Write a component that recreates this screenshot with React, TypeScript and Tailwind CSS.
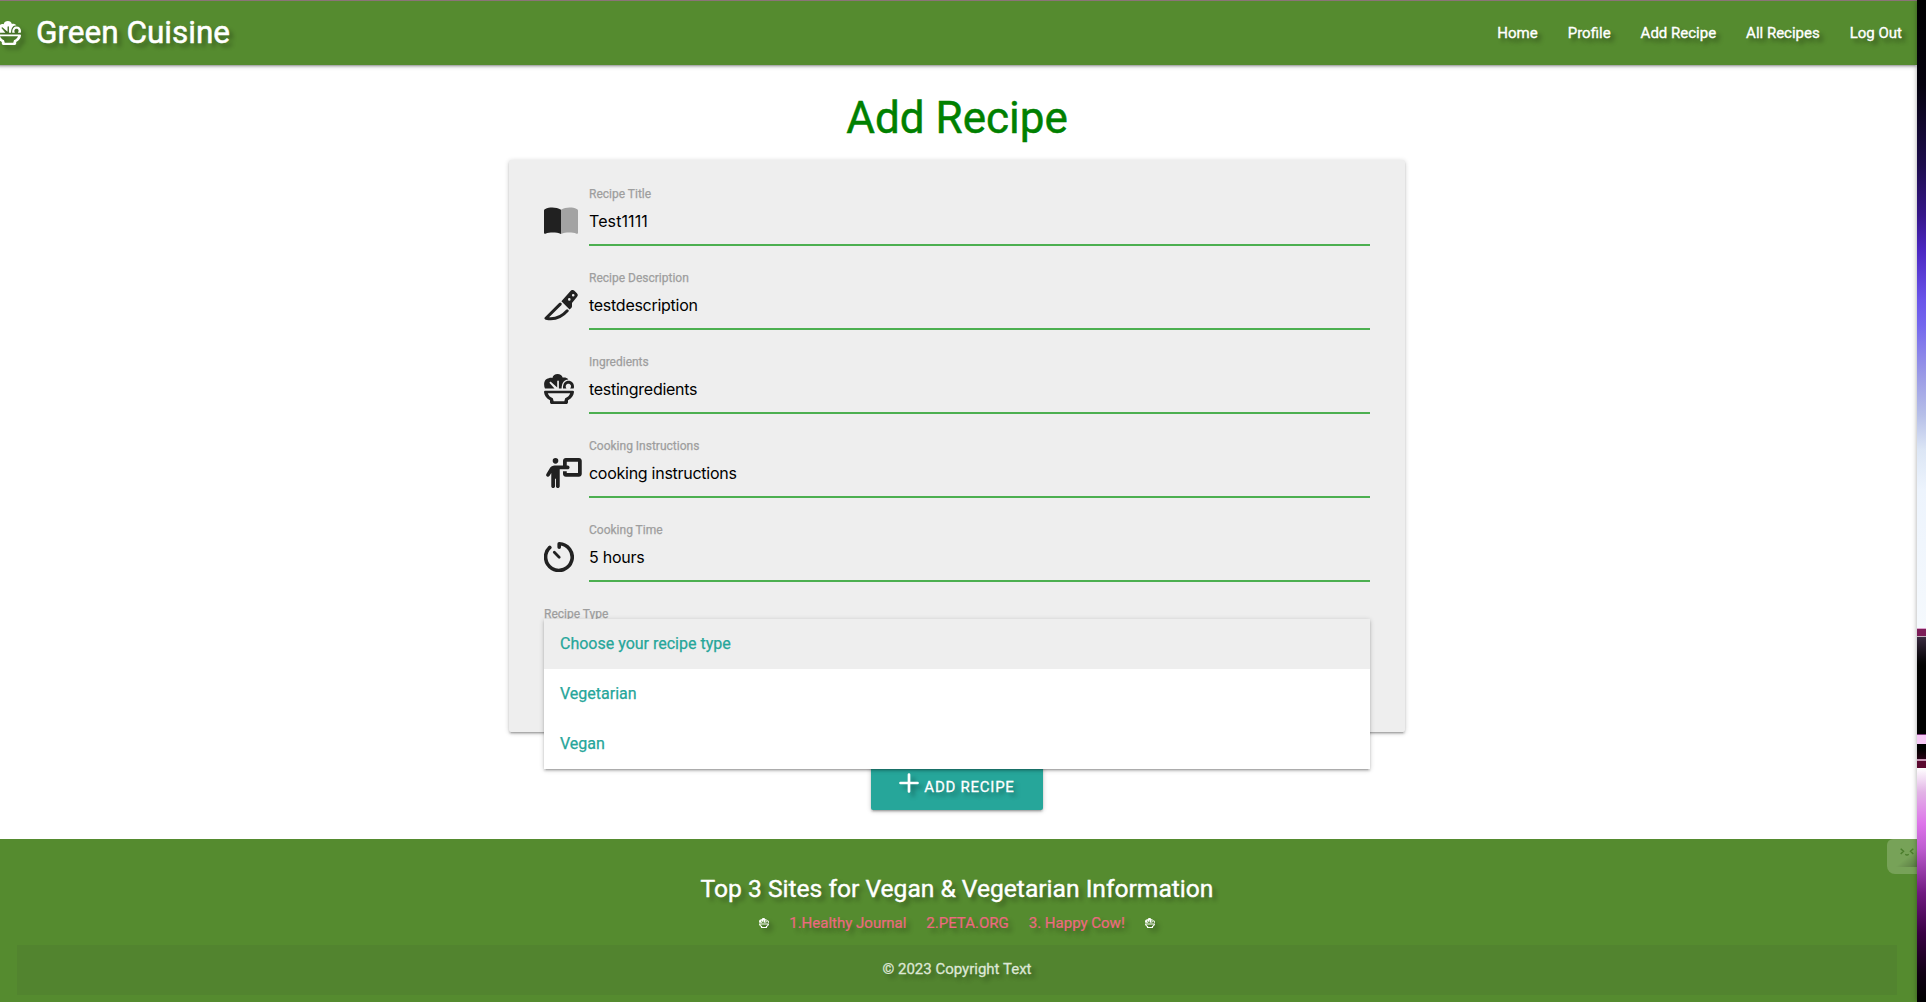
import { FaPersonChalkboard } from 'react-icons/fa6';
import type { ReactNode } from 'react';

function SaladIcon({ className }: { className: string }) {
  return (
    <svg viewBox="0 0 30 30" className={className} fill="currentColor">
      <path d="M1 14.6C-.8 10.5 0 4.7 4.900 4.300 6.200 3.600 7.600 3.700 8.400 4.100 8.800 1.400 11 0 13.600 0c2.500 0 4.500 1.300 5 3.600 2.100-.5 4.400.1 5.800 1.800-4.300-.1-6.700 3.400-6.800 9.200h-2.700V7.200c0-1-1.700-1-1.700 0v6.300L7.100 8c-.8-.7-2 .4-1.300 1.200l4.700 5.400z" />
      <path d="M19 14.600C18.800 8.900 21.600 6.800 24.400 6.800c3.400 0 5.600 2.500 5.600 5.600 0 .8-.1 1.500-.4 2.200h-3.500c2-2.400.6-4.800-1.700-4.800-2.200 0-3.500 2.200-2 4.800z" />
      <path fillRule="evenodd" d="M1.200 16.800h27.600c.8 0 1.300.6 1.200 1.300-.3 3.600-2.500 6.500-6 8.200v1.900c0 1-.8 1.800-1.800 1.800H7.800C6.800 30 6 29.200 6 28.200v-1.900C2.500 24.600.3 21.700 0 18.100c-.1-.7.4-1.300 1.200-1.300zm2.600 2.400c.7 2.200 2.300 3.800 5 5l.9 3h10.600l.9-3c2.700-1.200 4.300-2.800 5-5z" />
    </svg>
  );
}

function BookIcon() {
  return (
    <svg viewBox="0 0 34 30" preserveAspectRatio="none" className="mt-px h-[27px] w-[34px]">
      <path fill="#212121" d="M17 3v27C12.500 28 6 28 1.500 29.600.6 29.800 0 29.400 0 28.500V4.200C0 3.300.4 2.600 1.300 2.200 6-.2 12.500.2 17 3z" />
      <path fill="#a3a3a3" d="M17 3v27c4.500-2 11-2 15.500-.4.9.2 1.500-.2 1.500-1.100V4.200c0-.9-.4-1.600-1.300-2C28-.2 21.500.2 17 3z" />
    </svg>
  );
}

function KnifeIcon() {
  return (
    <svg viewBox="0 0 34 31" className="h-[31px] w-[34px]">
      <path fill="#212121" fillRule="evenodd" d="M26.500.9c1.100-1.200 2.700-1.200 3.900-.1l2.500 2.400c1.100 1.100 1.200 2.400.2 3.600L28 13v3.200c0 .8-.2 1.300-.8 1.800L25.600 19.500 17.400 11.300zM29.200 3.900a1.300 1.300 0 100 2.600 1.300 1.300 0 000-2.600zm-3.900 4.200a1.300 1.300 0 100 2.600 1.300 1.300 0 000-2.600z" />
      <path d="M16.200 14.100 2 28.300c8.700 1.800 15.700-1.300 21.200-7.500" fill="none" stroke="#212121" strokeWidth="3" strokeLinecap="round" strokeLinejoin="round" />
    </svg>
  );
}

function TimerIcon() {
  return (
    <svg viewBox="0 0 30 30" className="size-[30px]" fill="none" stroke="#212121" strokeLinecap="round" strokeLinejoin="round">
      <path d="M15.200 5.200V1.800A13.300 13.300 0 1 1 5.800 5.400" strokeWidth="3.600" />
      <path d="m10.300 10.300 4.900 4.900" strokeWidth="2.800" />
    </svg>
  );
}

const fields: { label: string; value: string; icon: ReactNode }[] = [
  { label: 'Recipe Title', value: 'Test1111', icon: <BookIcon /> },
  { label: 'Recipe Description', value: 'testdescription', icon: <KnifeIcon /> },
  { label: 'Ingredients', value: 'testingredients', icon: <SaladIcon className="size-[30px]" /> },
  { label: 'Cooking Instructions', value: 'cooking instructions', icon: <FaPersonChalkboard className="h-[30px] w-[38px]" /> },
  { label: 'Cooking Time', value: '5 hours', icon: <TimerIcon /> },
];

const navLinks = ['Home', 'Profile', 'Add Recipe', 'All Recipes', 'Log Out'];
const options = ['Choose your recipe type', 'Vegetarian', 'Vegan'];
const sites = ['1.Healthy Journal', '2.PETA.ORG', '3. Happy Cow!'];

function Header() {
  return (
    <header className="relative flex h-[65px] items-center justify-between border-t border-[#8b7378] bg-[#558b2f] shadow-[0_2px_2px_0_rgba(0,0,0,0.14),0_3px_1px_-2px_rgba(0,0,0,0.12),0_1px_5px_0_rgba(0,0,0,0.2)]">
      <a className="flex items-center text-[31.500px] text-white [-webkit-text-stroke:0.5px_white] [text-shadow:4px_4px_4px_rgba(0,0,0,0.3)]">
        <SaladIcon className="mr-[15px] size-6 drop-shadow-[4px_4px_2px_rgba(0,0,0,0.3)]" />
        Green Cuisine
      </a>
      <nav className="flex text-[15px] text-white [-webkit-text-stroke:0.35px_white] [text-shadow:4px_4px_4px_rgba(0,0,0,0.4)]">
        {navLinks.map((link) => (
          <a key={link} className="px-[15px]">{link}</a>
        ))}
      </nav>
    </header>
  );
}

function RecipeForm() {
  return (
    <form className="mx-auto h-[572px] w-[896px] rounded-[2px] bg-[#eeeeee] px-[35px] pt-6 shadow-[0_2px_2px_0_rgba(0,0,0,0.14),0_3px_1px_-2px_rgba(0,0,0,0.12),0_1px_5px_0_rgba(0,0,0,0.2)]">
      {fields.map((field) => (
        <div key={field.label} className="group flex h-[84px]">
          <div className="w-[45px] shrink-0 pt-[22px] text-[#212121]">{field.icon}</div>
          <div className="flex-1">
            <label className="block h-3 text-xs leading-[20px] text-[#9e9e9e] [-webkit-text-stroke:0.25px_#9e9e9e]">{field.label}</label>
            <div className="h-[50px] border-b-2 border-[#4caf50] pt-px font-['Inter',sans-serif] text-base leading-[49px] tracking-[-0.270px] text-black group-first:tracking-[0.100px]">{field.value}</div>
          </div>
        </div>
      ))}
      <div className="relative">
        <label className="block text-xs leading-[20px] text-[#9e9e9e] [-webkit-text-stroke:0.25px_#9e9e9e]">Recipe Type</label>
        <ul className="absolute top-[15px] left-0 z-10 w-full bg-white shadow-[0_2px_2px_0_rgba(0,0,0,0.14),0_3px_1px_-2px_rgba(0,0,0,0.12),0_1px_5px_0_rgba(0,0,0,0.2)]">
          {options.map((option) => (
            <li key={option} className="h-[50px] px-4 text-base leading-[50px] text-[#26a69a] [-webkit-text-stroke:0.25px_#26a69a] first:bg-[#eeeeee]">{option}</li>
          ))}
        </ul>
      </div>
    </form>
  );
}

function Footer() {
  return (
    <footer className="relative h-[163px] bg-[#558b2f] text-center text-white [text-shadow:4px_4px_4px_rgba(0,0,0,0.3)]">
      <h5 className="pt-[34px] text-[24.600px] leading-8 [-webkit-text-stroke:0.4px_white]">Top 3 Sites for Vegan &amp; Vegetarian Information</h5>
      <div className="mt-[7px] flex h-[22px] items-center justify-center text-[15px] text-[#ec6a80]">
        <SaladIcon className="mr-5 size-[10px] text-white drop-shadow-[4px_4px_2px_rgba(0,0,0,0.3)]" />
        <div className="flex gap-5 [-webkit-text-stroke:0.2px_#ec6a80]">
          {sites.map((site) => (
            <a key={site}>{site}</a>
          ))}
        </div>
        <SaladIcon className="ml-5 size-[10px] text-white drop-shadow-[4px_4px_2px_rgba(0,0,0,0.3)]" />
      </div>
      <div className="mx-5 mt-[11px] h-[50px] bg-[rgba(51,51,51,0.08)] text-[15px] leading-[48px] text-[#dde7d5] [-webkit-text-stroke:0.3px_#dde7d5]">© 2023 Copyright Text</div>
      <div className="absolute top-0 right-0 h-[35px] w-[30px] overflow-hidden rounded-l-lg rounded-tl-md bg-white/20">
        <div className="absolute top-[10px] left-2 h-[18px] w-[22px] bg-linear-to-br from-transparent via-transparent to-black/25" />
        <svg viewBox="0 0 14 8" className="absolute top-[9px] left-[13px] h-2 w-[14px]" fill="none" stroke="#4b7d2c" strokeWidth="1.500">
          <path d="m.7.7 2.800 2.600L.7 6M5.300 6.200q1.700 1.500 3.400 0M13.300.7l-2.800 2.600L13.300 6" />
        </svg>
      </div>
    </footer>
  );
}

export default function App() {
  return (
    <div className="flex h-[1002px] w-[1926px] overflow-hidden bg-white font-['Roboto',sans-serif]">
      <div className="w-[1917px] shrink-0 overflow-hidden">
        <div className="-ml-[3px] h-full w-[1920px]">
          <Header />
          <main className="h-[774px]">
            <h1 className="h-[95px] pt-[26px] text-center text-[44px] leading-[54px] text-[#008000] [-webkit-text-stroke:0.5px_#008000]">Add Recipe</h1>
            <RecipeForm />
            <div className="flex justify-center pt-6">
              <button className="flex h-[54px] w-[172px] items-center justify-center rounded-[2px] bg-[#26a69a] text-[15px] tracking-[0.750px] text-white shadow-[0_2px_2px_0_rgba(0,0,0,0.14),0_3px_1px_-2px_rgba(0,0,0,0.12),0_1px_5px_0_rgba(0,0,0,0.2)] [-webkit-text-stroke:0.3px_white] [text-shadow:4px_4px_4px_rgba(0,0,0,0.3)]">
                <svg viewBox="0 0 20 20" className="mr-[5px] size-5 drop-shadow-[4px_4px_2px_rgba(0,0,0,0.3)]" fill="none" stroke="currentColor" strokeWidth="2.700" strokeLinecap="round">
                  <path d="M10 1.500v17M1.500 10h17" />
                </svg>
                <span className="pt-[9px]">ADD RECIPE</span>
              </button>
            </div>
          </main>
          <Footer />
        </div>
      </div>
      <aside className="relative z-10 flex w-[9px] flex-col shadow-[0_0_5px_rgba(0,0,0,0.35)]">
        <div className="h-[628px] bg-[linear-gradient(to_bottom,#000_0px,#05020e_85px,#1d0d4d_165px,#351689_215px,#4b27c2_250px,#6a55ea_300px,#7467ee_325px,#9a9ae6_375px,#b6bfe8_415px,#dce6f5_450px,#edf4fd_490px,#f5f9fd_628px)]" />
        <div className="h-[8px] border-t border-[#dda6d0] bg-[#7c1d58]" />
        <div className="h-[98px] border-t border-[#c4b2bf] bg-linear-to-b from-[#3a2b41] via-[#020202] via-30% to-black" />
        <div className="h-[10px] border-t border-[#7a3a7a] bg-[#f6c9f6]" />
        <div className="h-[15px] bg-linear-to-b from-black to-[#280217]" />
        <div className="h-[2px] bg-[#c595b3]" />
        <div className="h-[7px] bg-[#5b0930]" />
        <div className="flex-1 bg-[linear-gradient(to_bottom,#fff_0px,#e2b3e6_24px,#dd73ea_56px,#be5dd0_80px,#701980_125px,#390043_165px,#100014_205px,#000_234px)]" />
      </aside>
    </div>
  );
}
